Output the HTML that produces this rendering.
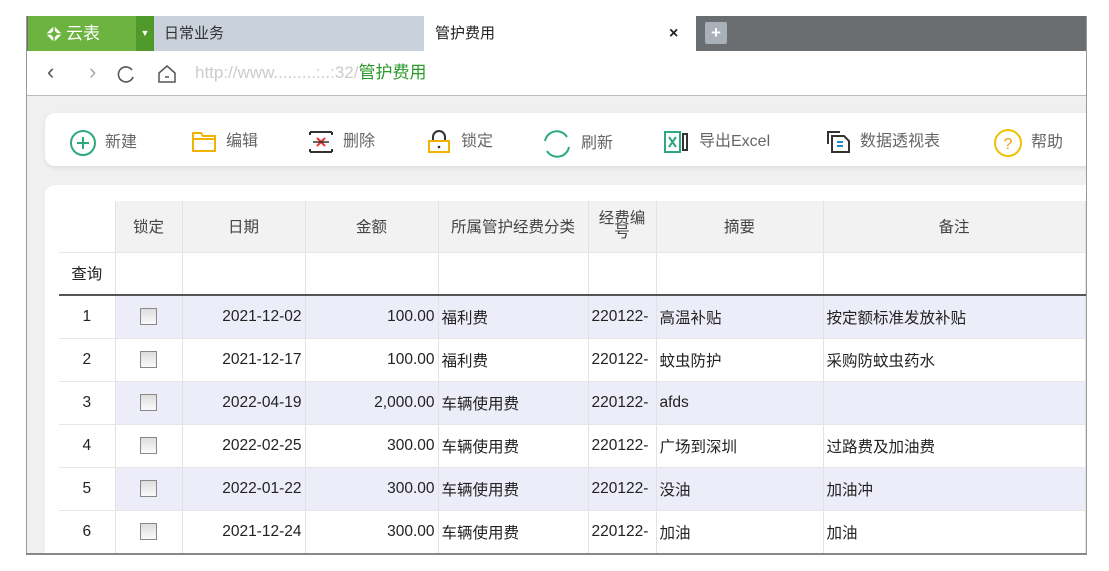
<!DOCTYPE html>
<html><head><meta charset="utf-8"><style>
*{margin:0;padding:0;box-sizing:border-box}
body{width:1109px;height:571px;background:#fff;position:relative;overflow:hidden;font-family:"Liberation Sans","Noto Sans CJK SC",sans-serif;color:#333}
.a{position:absolute}
.frame{left:26px;top:16px;width:1061px;height:538px;border:1px solid #999;border-top:none;background:#f0f0f0;overflow:hidden}
table{border-collapse:collapse;position:absolute;left:59px;top:201px;table-layout:fixed;font-size:15.5px}
td{border-right:1px solid #e2e2e2;border-bottom:1px solid #e6e6e6;height:43px;padding:0 3px;white-space:nowrap;overflow:hidden;color:#222}
tr.h td{background:#f2f2f2;height:51px;text-align:center;color:#444}
tr.q td{height:43px;background:#fff}
tr.q td{border-bottom:2px solid #555}
tr.l td{background:#ededfa}
tr td:first-child{background:#fff;text-align:center}
.cb{display:inline-block;width:17px;height:17px;border:1px solid #888;background:linear-gradient(#ddd,#fafafa);vertical-align:middle}
.tb{font-size:16px;color:#666}
.tb svg{margin-right:8px}
</style></head><body>
<div class="a frame">
 <div class="a" style="left:0;top:0;width:1061px;height:35px;background:#6b6e70"></div>
 <div class="a" style="left:1px;top:0;width:108px;height:35px;background:#6cb33f;color:#fff;font-size:17px;line-height:35px;padding-left:20px">
  <svg class="a" style="left:17px;top:9px" width="18" height="18" viewBox="0 0 18 18"><path d="M9 1L17 9L9 17L1 9Z" fill="#fff"/><path d="M9 5L13 9L9 13L5 9Z" fill="#6cb33f"/><path d="M9 1V17M1 9H17" stroke="#6cb33f" stroke-width="1.5"/></svg>
  <span style="margin-left:18px">云表</span></div>
 <div class="a" style="left:109px;top:0;width:18px;height:35px;background:#4f9a2a;color:#fff;font-size:9px;line-height:35px;text-align:center">▼</div>
 <div class="a" style="left:127px;top:0;width:270px;height:35px;background:#c9d1db;font-size:15px;line-height:35px;padding-left:10px;color:#333">日常业务</div>
 <div class="a" style="left:397px;top:0;width:272px;height:36px;background:#fff;font-size:15px;line-height:35px;padding-left:11px;color:#222">管护费用<span class="a" style="left:245px;top:0;font-weight:bold;font-size:16px">×</span></div>
 <div class="a" style="left:678px;top:6px;width:22px;height:22px;background:#aab0b8;border-radius:2px;color:#fff;text-align:center;line-height:21px;font-size:17px;font-weight:bold">+</div>
 <div class="a" style="left:0;top:35px;width:1061px;height:45px;background:#fff;border-bottom:1px solid #bbb"></div>
 <div class="a" style="left:20px;top:45px;font-size:22px;color:#555;line-height:22px">‹</div>
 <div class="a" style="left:62px;top:45px;font-size:22px;color:#aaa;line-height:22px">›</div>
 <svg class="a" style="left:89px;top:48px" width="20" height="20" viewBox="0 0 20 20"><path d="M16 6A7.5 7.5 0 1 0 17 13" fill="none" stroke="#555" stroke-width="1.6"/></svg>
 <svg class="a" style="left:130px;top:48px" width="20" height="20" viewBox="0 0 20 20"><path d="M2 9L10 2L18 9V18H2Z" fill="none" stroke="#555" stroke-width="1.5"/><path d="M8 13H12" stroke="#555" stroke-width="1.5"/></svg>
 <div class="a" style="left:168px;top:47px;font-size:17px;color:#ccc;line-height:20px">http://www.........:..:32/<span style="color:#2a9a2a">管护费用</span></div>
 <div class="a" style="left:18px;top:97px;width:1060px;height:53px;background:#fff;border-radius:10px;box-shadow:0 2px 4px #ddd"></div>
 <div class="a tb" style="left:42px;top:113px;line-height:24px">
  <svg style="vertical-align:middle" width="28" height="28" viewBox="0 0 28 28"><circle cx="14" cy="14" r="12" fill="none" stroke="#2eaa7a" stroke-width="2"/><path d="M14 8V20M8 14H20" stroke="#2eaa7a" stroke-width="2"/></svg>新建</div>
 <div class="a tb" style="left:163px;top:113px;line-height:24px">
  <svg style="vertical-align:middle" width="28" height="26" viewBox="0 0 28 26"><path d="M3 4H11L13 7H25V22H3Z" fill="none" stroke="#f0b400" stroke-width="2"/><path d="M3 10H25" stroke="#f0b400" stroke-width="2"/></svg>编辑</div>
 <div class="a tb" style="left:280px;top:113px;line-height:24px">
  <svg style="vertical-align:middle" width="28" height="26" viewBox="0 0 28 26"><path d="M3 3H25M3 23H25M3 3V6M25 3V6M3 23V20M25 23V20" stroke="#333" stroke-width="2"/><path d="M10 9L18 17M18 9L10 17" stroke="#e33" stroke-width="2"/><path d="M6 13H22" stroke="#333" stroke-width="1.5"/></svg>删除</div>
 <div class="a tb" style="left:398px;top:113px;line-height:24px">
  <svg style="vertical-align:middle" width="28" height="26" viewBox="0 0 28 26"><path d="M8 12V8A6 6 0 0 1 20 8V12" fill="none" stroke="#333" stroke-width="2"/><rect x="4" y="12" width="20" height="11" fill="none" stroke="#f0b400" stroke-width="2"/><circle cx="14" cy="18" r="1.3" fill="#333"/></svg>锁定</div>
 <div class="a tb" style="left:514px;top:113px;line-height:24px">
  <svg style="vertical-align:middle" width="32" height="30" viewBox="0 0 32 30"><path d="M26 8A12 12 0 0 0 4 12M6 22A12 12 0 0 0 28 18" fill="none" stroke="#2eaa7a" stroke-width="2"/></svg>刷新</div>
 <div class="a tb" style="left:636px;top:113px;line-height:24px">
  <svg style="vertical-align:middle" width="28" height="26" viewBox="0 0 28 26"><rect x="2" y="3" width="15" height="20" fill="none" stroke="#2eaa7a" stroke-width="2"/><path d="M6 8L13 18M13 8L6 18" stroke="#2eaa7a" stroke-width="2"/><path d="M20 5V21H24V5Z" fill="none" stroke="#333" stroke-width="2"/></svg>导出Excel</div>
 <div class="a tb" style="left:797px;top:113px;line-height:24px">
  <svg style="vertical-align:middle" width="28" height="26" viewBox="0 0 28 26"><path d="M4 15V3H16" fill="none" stroke="#333" stroke-width="2"/><path d="M8 7H20L25 12V23H8Z" fill="none" stroke="#333" stroke-width="2"/><path d="M13 13H19M13 17H19" stroke="#2288cc" stroke-width="2"/></svg>数据透视表</div>
 <div class="a tb" style="left:966px;top:112px;line-height:26px">
  <svg style="vertical-align:middle" width="30" height="30" viewBox="0 0 30 30"><circle cx="15" cy="15" r="13" fill="none" stroke="#f0c000" stroke-width="2"/><text x="15" y="21" font-size="16" text-anchor="middle" fill="#f0a000" font-family="Liberation Sans">?</text></svg>帮助</div>
 <div class="a" style="left:18px;top:169px;width:1060px;height:400px;background:#fff;border-radius:10px 0 0 0"></div>
</div>
<table>
<colgroup><col style="width:56px"><col style="width:67px"><col style="width:123px"><col style="width:133px"><col style="width:150px"><col style="width:68px"><col style="width:167px"><col style="width:262px"></colgroup>
<tr class="h"><td></td><td>锁定</td><td>日期</td><td>金额</td><td>所属管护经费分类</td><td style="line-height:14px">经费编<br>号</td><td>摘要</td><td>备注</td></tr>
<tr class="q"><td>查询</td><td></td><td></td><td></td><td></td><td></td><td></td><td></td></tr>
<tr class="l"><td>1</td><td style="text-align:center"><span class="cb"></span></td><td style="text-align:right">2021-12-02</td><td style="text-align:right">100.00</td><td>福利费</td><td>220122-</td><td>高温补贴</td><td>按定额标准发放补贴</td></tr>
<tr><td>2</td><td style="text-align:center"><span class="cb"></span></td><td style="text-align:right">2021-12-17</td><td style="text-align:right">100.00</td><td>福利费</td><td>220122-</td><td>蚊虫防护</td><td>采购防蚊虫药水</td></tr>
<tr class="l"><td>3</td><td style="text-align:center"><span class="cb"></span></td><td style="text-align:right">2022-04-19</td><td style="text-align:right">2,000.00</td><td>车辆使用费</td><td>220122-</td><td>afds</td><td></td></tr>
<tr><td>4</td><td style="text-align:center"><span class="cb"></span></td><td style="text-align:right">2022-02-25</td><td style="text-align:right">300.00</td><td>车辆使用费</td><td>220122-</td><td>广场到深圳</td><td>过路费及加油费</td></tr>
<tr class="l"><td>5</td><td style="text-align:center"><span class="cb"></span></td><td style="text-align:right">2022-01-22</td><td style="text-align:right">300.00</td><td>车辆使用费</td><td>220122-</td><td>没油</td><td>加油冲</td></tr>
<tr><td>6</td><td style="text-align:center"><span class="cb"></span></td><td style="text-align:right">2021-12-24</td><td style="text-align:right">300.00</td><td>车辆使用费</td><td>220122-</td><td>加油</td><td>加油</td></tr>
</table>
<div class="a" style="left:26px;top:553px;width:1061px;height:2px;background:#888"></div>
<div class="a" style="left:1086px;top:16px;width:1px;height:538px;background:#999"></div>
</body></html>
